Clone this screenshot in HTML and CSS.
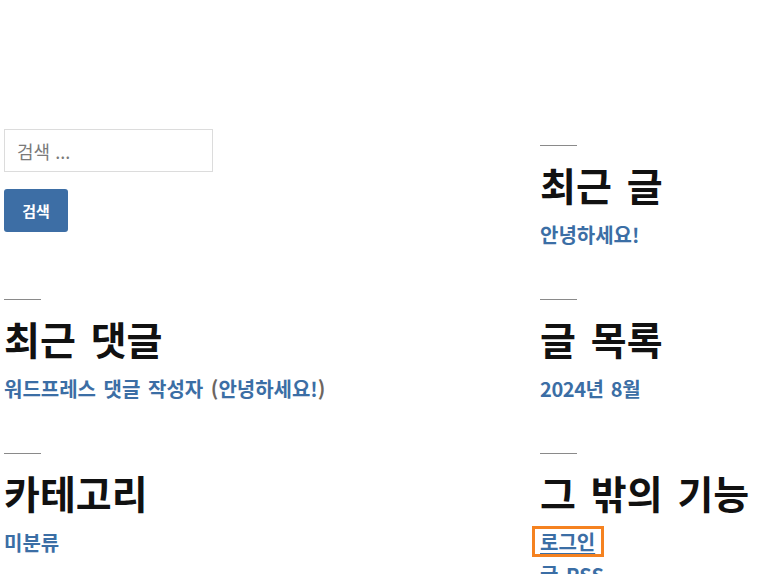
FILE: index.html
```html
<!DOCTYPE html>
<html lang="ko">
<head>
<meta charset="utf-8">
<title>위젯</title>
<link rel="stylesheet" href="styles.css">
</head>
<body>
<div class="widgets">
  <section class="widget search-widget">
    <form class="search-form">
      <input class="search-field" type="search" placeholder="검색 ...">
      <button class="search-submit" type="button">검색</button>
    </form>
  </section>
  <section class="widget">
    <h2 class="widget-title">최근 글</h2>
    <ul class="widget-list">
      <li><a href="#">안녕하세요!</a></li>
    </ul>
  </section>
  <section class="widget">
    <h2 class="widget-title">최근 댓글</h2>
    <ul class="widget-list">
      <li><span class="comment-meta"><a href="#">워드프레스 댓글 작성자</a> (<a href="#">안녕하세요!</a>)</span></li>
    </ul>
  </section>
  <section class="widget">
    <h2 class="widget-title">글 목록</h2>
    <ul class="widget-list">
      <li><a href="#" class="archive-link">2024년 8월</a></li>
    </ul>
  </section>
  <section class="widget">
    <h2 class="widget-title">카테고리</h2>
    <ul class="widget-list">
      <li><a href="#">미분류</a></li>
    </ul>
  </section>
  <section class="widget">
    <h2 class="widget-title">그 밖의 기능</h2>
    <ul class="widget-list">
      <li><a href="#" class="focused">로그인</a></li>
      <li><a href="#">글 RSS</a></li>
      <li><a href="#">댓글 RSS</a></li>
    </ul>
  </section>
</div>
</body>
</html>
```

FILE: styles.css
```css
html, body {
  margin: 0;
  padding: 0;
  background: #ffffff;
}

body {
  font-family: "Noto Sans CJK KR", "Noto Sans", sans-serif;
  color: #6d6560;
  overflow: hidden;
}

.widgets {
  display: grid;
  grid-template-columns: 536px 1fr;
  grid-auto-rows: 154px;
  padding: 129px 0 0 4px;
}

.widget {
  padding-top: 16px;
}

.search-widget {
  padding-top: 0;
}

.search-form {
  display: flex;
  flex-direction: column;
  align-items: flex-start;
  gap: 17px;
}

.search-field {
  box-sizing: border-box;
  width: 209px;
  height: 43px;
  border: 1px solid #dcdcdc;
  padding: 0 12px;
  font-family: inherit;
  font-size: 18px;
  color: #333;
  outline: none;
  -webkit-appearance: none;
  appearance: none;
  border-radius: 0;
  margin: 0;
}

.search-field::placeholder {
  color: #7a7a7a;
}

.search-submit {
  box-sizing: border-box;
  width: 64px;
  height: 43px;
  border: none;
  border-radius: 3px;
  background: #3d6ea5;
  color: #ffffff;
  font-family: inherit;
  font-size: 15px;
  font-weight: 700;
  padding: 0;
  margin: 0;
}

.widget-title {
  margin: 0;
  font-size: 39px;
  font-weight: 700;
  color: #111111;
  line-height: 46px;
  word-spacing: 4px;
}

.widget-title::before {
  content: "";
  display: block;
  width: 37px;
  height: 1px;
  background: #8a8a8a;
  margin-bottom: 15px;
}

.widget-list {
  list-style: none;
  margin: 12px 0 0;
  padding: 0;
  font-size: 20px;
  font-weight: 700;
  line-height: 32px;
  word-spacing: 2px;
}

.widget-list a {
  color: #3b6ea5;
  text-decoration: none;
}

.widget-list a.archive-link {
  letter-spacing: -0.4px;
}

.widget-list a.focused {
  display: inline-block;
  line-height: 25px;
  padding: 0 6px 0 5px;
  margin-left: -5px;
  vertical-align: 1px;
  text-decoration: underline;
  text-decoration-thickness: 1px;
  text-underline-offset: 3px;
  outline: 3px solid #f58220;
  outline-offset: 0;
}
```
